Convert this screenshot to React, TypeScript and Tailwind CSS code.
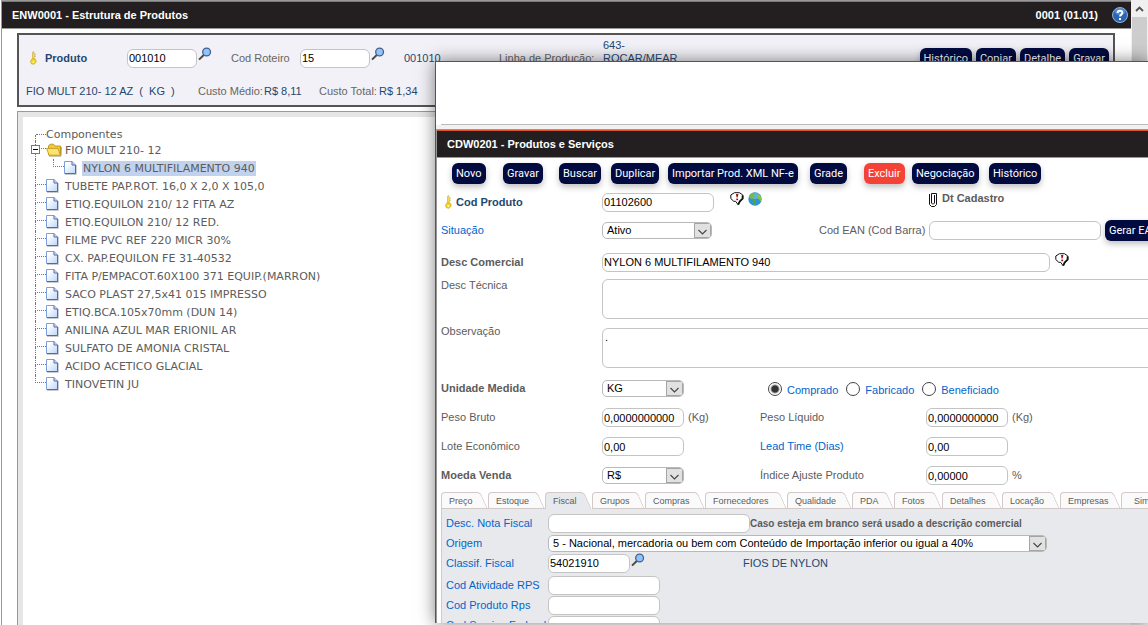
import { useState, type ReactNode } from "react";

const treeItems = [
  "TUBETE PAP.ROT. 16,0 X 2,0 X 105,0",
  "ETIQ.EQUILON 210/ 12 FITA AZ",
  "ETIQ.EQUILON 210/ 12 RED.",
  "FILME PVC REF 220 MICR 30%",
  "CX. PAP.EQUILON FE 31-40532",
  "FITA P/EMPACOT.60X100 371 EQUIP.(MARRON)",
  "SACO PLAST 27,5x41 015 IMPRESSO",
  "ETIQ.BCA.105x70mm (DUN 14)",
  "ANILINA AZUL MAR ERIONIL AR",
  "SULFATO DE AMONIA CRISTAL",
  "ACIDO ACETICO GLACIAL",
  "TINOVETIN JU",
];

const tabs = [
  { name: "Preço", width: "w-[47px]" },
  { name: "Estoque", width: "w-[57px]" },
  { name: "Fiscal", width: "w-[47px]" },
  { name: "Grupos", width: "w-[53px]" },
  { name: "Compras", width: "w-[60px]" },
  { name: "Fornecedores", width: "w-[82px]" },
  { name: "Qualidade", width: "w-[65px]" },
  { name: "PDA", width: "w-[42px]" },
  { name: "Fotos", width: "w-[48px]" },
  { name: "Detalhes", width: "w-[60px]" },
  { name: "Locação", width: "w-[58px]" },
  { name: "Empresas", width: "w-[61px]" },
  { name: "Similares", width: "w-[61px]" },
];

const KeyIcon = () => (
  <svg width="9" height="14" viewBox="0 0 9 14" className="shrink-0">
    <path d="M3.6 1 L5 0.7 L5.4 8 L3.4 8 Z" fill="#f6e36a" stroke="#c9a92c" strokeWidth="0.6" />
    <path d="M2.4 8.4 L4.4 7.4 L6.8 8.6 L7.2 11 L5 13.3 L2.4 12.8 L1.4 10.6 Z" fill="#f3d51c" stroke="#c2a01a" strokeWidth="0.6" />
    <path d="M5.5 3.2h1.2M5.5 5.2h1.2" stroke="#b8a24a" />
    <circle cx="4.3" cy="11" r="1" fill="#fff6a8" />
  </svg>
);

const SearchButton = ({ label }: { label: string }) => (
  <button type="button" aria-label={label} className="shrink-0">
    <svg width="14" height="14" viewBox="0 0 14 14">
      <path d="M1 12.6 L6 7.8" stroke="#4b4a3e" strokeWidth="2" />
      <circle cx="8.6" cy="5" r="3.9" fill="#8cc4ff" stroke="#4a5f86" strokeWidth="1.3" />
    </svg>
  </button>
);

const AlertIcon = () => (
  <svg width="14" height="14" viewBox="0 0 14 14" className="shrink-0">
    <path
      d="M4.5 0.7H9.5L12.8 3V6.6L10 9.3L8 12.6L5.6 9.3H3.8L0.8 6.6V3Z"
      fill="#fff"
      stroke="#111"
      strokeWidth="1"
    />
    <path d="M12.6 3.4V6.6L9.8 9.3L8.2 12.6" fill="none" stroke="#111" strokeWidth="1.8" />
    <path d="M6 2H8.4L7.6 5.6H6.6Z" fill="#9b1010" />
    <rect x="6.3" y="6.6" width="1.8" height="1.6" fill="#9b1010" />
  </svg>
);

const GlobeIcon = () => (
  <svg width="14" height="14" viewBox="0 0 14 14" className="shrink-0">
    <circle cx="7" cy="7" r="6.7" fill="#2b95dc" />
    <ellipse cx="7" cy="4" rx="5" ry="3" fill="#7cc8f2" opacity="0.6" />
    <path d="M0.9 4.5 L3.2 1.6 L6 0.6 L7 1.8 L6 3 L6.8 4.4 L5 5.6 L4.4 7.2 L2.6 6.6 Z" fill="#7cb93c" />
    <path d="M4.4 7.2 L7.6 7.8 L8.4 9.6 L6.8 11.4 L6.6 13.2 L5.4 12 Z" fill="#5fa32e" />
    <path d="M9.2 2.8 L11.4 2.4 L13.2 4.8 L13.6 7.6 L12.4 9.6 L11 7.2 L9.6 6 Z" fill="#86c441" />
  </svg>
);

const ClipIcon = () => (
  <svg width="10" height="16" viewBox="0 0 10 16" className="shrink-0">
    <path d="M1.5 2V12.5L3.5 14.5H6.5L8.5 12.5V1.5H3.5V11L4.5 12H5.5L6.5 11V3" fill="none" stroke="#111" />
  </svg>
);

const HelpIcon = () => (
  <svg width="16" height="16" viewBox="0 0 16 16">
    <circle cx="8" cy="8" r="7.5" fill="#2a66b4" stroke="#9dc0ea" strokeWidth="0.9" />
    <ellipse cx="8" cy="4.5" rx="5.4" ry="3.4" fill="#6ea3de" opacity="0.6" />
    <path d="M5.6 6.1C5.6 3 10.5 3.1 10.4 5.9C10.3 7.7 8 7.6 8 9.6" fill="none" stroke="#fff" strokeWidth="1.9" />
    <rect x="7" y="11" width="2" height="2" fill="#fff" />
  </svg>
);

const FileIcon = () => (
  <svg width="13" height="14" viewBox="0 0 13 14" className="shrink-0">
    <defs>
      <linearGradient id="sheet" x1="0" y1="0" x2="1" y2="1">
        <stop offset="0.2" stopColor="#ffffff" />
        <stop offset="1" stopColor="#b9d7fb" />
      </linearGradient>
    </defs>
    <path d="M1 13.5H12.4V4" fill="none" stroke="#c9c9d2" />
    <path d="M0.5 0.5H8L11.5 4V12.5H0.5Z" fill="url(#sheet)" stroke="#7ba0dc" />
    <path d="M8 0.5V4H11.5V12.5H1" fill="none" stroke="#5a65ad" />
  </svg>
);

const FolderIcon = () => (
  <svg width="16" height="14" viewBox="0 0 16 14" className="shrink-0">
    <path d="M2.5 3L4 1.2H7.5L9 3H14.5V12H2.5Z" fill="#efc93f" stroke="#b98f16" strokeWidth="0.9" />
    <path d="M0.6 5.4H12L14.4 12.2H3Z" fill="#fbe36c" stroke="#c59a1c" strokeWidth="0.9" />
    <path d="M3 13.2H15L15.5 4" fill="none" stroke="#9a8b5a" strokeWidth="0.7" />
  </svg>
);

const Button = ({ children, className = "bg-[#010b40]" }: { children: ReactNode; className?: string }) => (
  <button
    type="button"
    className={`h-[21px] shrink-0 rounded-md px-1 font-[Roboto,sans-serif] text-[11px] leading-[21px] whitespace-nowrap text-white shadow-[0_3px_6px_rgba(0,0,0,0.25)] ${className}`}
  >
    {children}
  </button>
);

const TextInput = ({ id, value = "", className }: { id: string; value?: string; className: string }) => (
  <input
    id={id}
    defaultValue={value}
    className={`h-[19px] rounded-md border border-[#c4c4c4] bg-white px-px text-[11px] text-black outline-none ${className}`}
  />
);

const SelectBox = ({ id, value, className }: { id: string; value: string; className: string }) => (
  <div className={`relative h-[17px] overflow-hidden rounded-[5px] border border-[#b9b9b9] bg-white ${className}`}>
    <select id={id} className="block h-full w-full appearance-none pl-1 text-[11px] leading-[15px] text-black outline-none">
      <option>{value}</option>
    </select>
    <span className="pointer-events-none absolute inset-y-0 right-0 flex w-[17px] items-center justify-center border border-[#a5a5a5] bg-[#e1e1e1] pt-[3px]">
      <svg width="9" height="6" viewBox="0 0 9 6">
        <path d="M0.5 1L4.5 5L8.5 1" fill="none" stroke="#444" strokeWidth="1.1" />
      </svg>
    </span>
  </div>
);

// Dotted connector to the left of every node
const Branch = ({ first = false, last = false }: { first?: boolean; last?: boolean }) => (
  <span className="flex w-[11px] shrink-0 flex-col self-stretch">
    <span className={`h-2 border-b border-dotted border-[#777] ${first ? "ml-px" : "border-l"}`} />
    <span className={`grow border-dotted border-[#777] ${last ? "" : "border-l"}`} />
  </span>
);

const Tree = () => (
  <ul className="pt-[10px] pl-3 font-['DejaVu_Sans',sans-serif] text-[11px] text-[#5c5c5c]">
    <li className="flex h-[14px] items-center">
      <Branch first />
      Componentes
    </li>
    <li>
      <div className="relative flex h-[18px] items-center">
        <Branch />
        <button
          type="button"
          aria-label="Recolher"
          className="absolute top-1 -left-1 flex size-[9px] items-center justify-center border border-[#777] bg-white"
        >
          <span className="h-px w-[5px] bg-black" />
        </button>
        <FolderIcon />
        <span className="ml-[3px]">FIO MULT 210- 12</span>
      </div>
      <ul className="border-l border-dotted border-[#777] pl-[17px]">
        <li className="flex h-[18px] items-center">
          <Branch last />
          <FileIcon />
          <span className="ml-[5px] bg-[#c1d2ee] px-px leading-[15px]">NYLON 6 MULTIFILAMENTO 940</span>
        </li>
      </ul>
    </li>
    {treeItems.map((item, index) => (
      <li key={item} className="flex h-[18px] items-center">
        <Branch last={index === treeItems.length - 1} />
        <FileIcon />
        <span className="ml-[6px] whitespace-nowrap">{item}</span>
      </li>
    ))}
  </ul>
);

const Label = ({ htmlFor, className = "", children }: { htmlFor: string; className?: string; children: ReactNode }) => (
  <label htmlFor={htmlFor} className={`shrink-0 whitespace-nowrap ${className}`}>
    {children}
  </label>
);

const StructurePage = () => (
  <div className="flex h-full">
    <main className="ml-px flex min-w-0 grow flex-col border-t border-l border-[#999] bg-white">
      <header className="flex h-7 shrink-0 items-center border-t border-b border-t-[#e0562b] border-b-[#999] bg-[#231f20] pr-[3px] pl-[10px] text-[11px] font-bold text-white">
        <h1>ENW0001 - Estrutura de Produtos</h1>
        <span className="mr-[14px] ml-auto">0001 (01.01)</span>
        <button type="button" aria-label="Ajuda">
          <HelpIcon />
        </button>
      </header>

      <section className="mt-1 mr-4 ml-[15px] h-[74px] shrink-0 border-2 border-double border-[#555] bg-[#f2f1f7] text-[#25476f]">
        <div className="flex h-[46px] items-center pl-[10px]">
          <KeyIcon />
          <Label htmlFor="produto" className="ml-[7px] w-[82px] font-bold">Produto</Label>
          <TextInput id="produto" value="001010" className="w-[70px]" />
          <span className="mb-2 ml-px flex w-[33px]">
            <SearchButton label="Buscar produto" />
          </span>
          <Label htmlFor="roteiro" className="w-[69px] text-[#666]">Cod Roteiro</Label>
          <TextInput id="roteiro" value="15" className="w-[70px]" />
          <span className="mb-2 ml-px flex w-[33px]">
            <SearchButton label="Buscar roteiro" />
          </span>
          <span className="w-[95px]">001010</span>
          <span className="w-[104px] text-[#666]">Linha de Produção:</span>
          <span className="mb-3 w-20 leading-[13px]">643- ROCAR/MEAR</span>
          <div className="mr-1 ml-auto flex gap-1">
            <Button>Histórico</Button>
            <Button>Copiar</Button>
            <Button>Detalhe</Button>
            <Button>Gravar</Button>
          </div>
        </div>
        <div className="flex h-5 items-center pl-[7px]">
          <span className="w-[172px] whitespace-pre">FIO MULT 210- 12 AZ  (  KG  )</span>
          <span className="w-[66px] text-[#666]">Custo Médio:</span>
          <span className="w-[55px]">R$ 8,11</span>
          <span className="w-[60px] text-[#666]">Custo Total:</span>
          <span>R$ 1,34</span>
        </div>
      </section>

      <section className="mt-1 mr-4 ml-[15px] grow border-t border-l border-[#999] bg-[#e6e6e6] pt-[5px] pl-[5px]">
        <div className="h-full bg-white">
          <Tree />
        </div>
      </section>
    </main>
    <div className="w-[17px] shrink-0 bg-[#f0f0f0]">
      <div className="flex h-[17px] items-center justify-center">
        <svg width="9" height="6" viewBox="0 0 9 6">
          <path d="M1 5L4.5 1.5L8 5" fill="none" stroke="#505050" strokeWidth="1.8" />
        </svg>
      </div>
      <div className="mx-px h-1/2 bg-[#cdcdcd]" />
    </div>
  </div>
);

const FiscalPanel = () => (
  <div className="grow border-l border-[#d3c9c9] bg-[#e8e9ed] pt-1 pl-1 text-[#0066cc]">
    <div className="flex h-5 items-center">
      <Label htmlFor="nota" className="w-[102px]">Desc. Nota Fiscal</Label>
      <TextInput id="nota" className="w-[202px]" />
      <b className="text-[10px] whitespace-nowrap text-[#5c5c5c]">Caso esteja em branco será usado a descrição comercial</b>
    </div>
    <div className="flex h-5 items-center">
      <Label htmlFor="origem" className="w-[102px]">Origem</Label>
      <SelectBox
        id="origem"
        value="5 - Nacional, mercadoria ou bem com Conteúdo de Importação inferior ou igual a 40%"
        className="w-[499px]"
      />
    </div>
    <div className="mb-[2px] flex h-5 items-center">
      <Label htmlFor="classif" className="w-[102px]">Classif. Fiscal</Label>
      <TextInput id="classif" value="54021910" className="w-[82px]" />
      <span className="mb-[6px] ml-px flex w-28">
        <SearchButton label="Buscar classificação" />
      </span>
      <span className="text-[#25476f]">FIOS DE NYLON</span>
    </div>
    <div className="flex h-5 items-center">
      <Label htmlFor="atividade" className="w-[102px]">Cod Atividade RPS</Label>
      <TextInput id="atividade" className="w-28" />
    </div>
    <div className="flex h-5 items-center">
      <Label htmlFor="rps" className="w-[102px]">Cod Produto Rps</Label>
      <TextInput id="rps" className="w-28" />
    </div>
    <div className="flex h-5 items-center">
      <Label htmlFor="servico" className="w-[102px]">Cod Serviço Federal</Label>
      <TextInput id="servico" className="w-28" />
    </div>
  </div>
);

const ProductWindow = () => {
  const [tab, setTab] = useState("Fiscal");
  const [kind, setKind] = useState("Comprado");

  return (
    <div
      role="dialog"
      aria-label="Produtos e Serviços"
      className="absolute top-[61px] right-0 bottom-[2px] left-[435px] flex flex-col overflow-hidden border-t border-l border-[#555] bg-white shadow-[0_0_16px_rgba(0,0,0,0.5)]"
    >
      <div className="ml-[5px] h-[63px] shrink-0 border-b border-[#bbb]" />
      <div className="h-1 shrink-0 bg-[#f1f1f3]" />
      <div className="flex min-h-0 grow flex-col border-t border-l border-[#999]">
        <header className="flex h-7 shrink-0 items-center border-t border-b border-t-[#e0562b] border-b-[#999] bg-[#231f20] pl-[10px] font-bold text-white">
          <h2>CDW0201 - Produtos e Serviços</h2>
        </header>

        <div className="flex h-[30px] shrink-0 items-center pl-[15px]">
          <span className="w-[51px] shrink-0"><Button>Novo</Button></span>
          <span className="w-14 shrink-0"><Button>Gravar</Button></span>
          <span className="w-[52px] shrink-0"><Button>Buscar</Button></span>
          <span className="w-[57px] shrink-0"><Button>Duplicar</Button></span>
          <span className="w-[142px] shrink-0"><Button>Importar Prod. XML NF-e</Button></span>
          <span className="w-[54px] shrink-0"><Button>Grade</Button></span>
          <span className="w-12 shrink-0"><Button className="bg-[#f44336]">Excluir</Button></span>
          <span className="w-[77px] shrink-0"><Button>Negociação</Button></span>
          <Button>Histórico</Button>
        </div>

        <form className="flex min-h-0 grow flex-col pl-1 text-[#5c5c5c]">
          <div className="flex h-7 shrink-0 items-center">
            <span className="flex w-[161px] shrink-0 items-center gap-[3px] pl-[3px] text-[#25476f]">
              <KeyIcon />
              <Label htmlFor="cod" className="font-bold">Cod Produto</Label>
            </span>
            <TextInput id="cod" value="01102600" className="w-28" />
            <span className="mb-[6px] ml-4 flex w-[198px] shrink-0 gap-1">
              <AlertIcon />
              <GlobeIcon />
            </span>
            <span className="mb-1"><ClipIcon /></span>
            <b className="mb-2 ml-1">Dt Cadastro</b>
          </div>
          <div className="flex h-[29px] shrink-0 items-center">
            <Label htmlFor="situacao" className="w-[161px] text-[#0066cc]">Situação</Label>
            <SelectBox id="situacao" value="Ativo" className="w-[110px] shrink-0" />
            <Label htmlFor="ean" className="ml-[107px] w-[110px]">Cod EAN (Cod Barra)</Label>
            <TextInput id="ean" className="mr-1 w-[172px] shrink-0" />
            <Button>Gerar EAN</Button>
          </div>
          <div className="flex h-[34px] shrink-0 items-center">
            <Label htmlFor="comercial" className="w-[161px] font-bold">Desc Comercial</Label>
            <TextInput id="comercial" value="NYLON 6 MULTIFILAMENTO 940" className="mr-[5px] w-[448px]" />
            <span className="mb-1"><AlertIcon /></span>
          </div>
          <div className="flex shrink-0">
            <Label htmlFor="tecnica" className="w-[161px]">Desc Técnica</Label>
            <textarea id="tecnica" className="-mr-2 h-10 grow resize-none rounded-md border border-[#c4c4c4] bg-white outline-none" />
          </div>
          <div className="mb-[6px] flex shrink-0">
            <Label htmlFor="obs" className="w-[161px] pt-[6px]">Observação</Label>
            <textarea
              id="obs"
              defaultValue="."
              className="mt-[9px] -mr-2 h-10 grow resize-none rounded-md border border-[#c4c4c4] bg-white px-[2px] pt-[2px] text-black outline-none"
            />
          </div>
          <div className="flex h-[29px] shrink-0 items-center">
            <Label htmlFor="unidade" className="w-[161px] font-bold">Unidade Medida</Label>
            <SelectBox id="unidade" value="KG" className="w-[82px]" />
            <div className="ml-[84px] flex gap-2">
              {["Comprado", "Fabricado", "Beneficiado"].map((option) => (
                <label key={option} className="flex items-center gap-[5px] text-[#0066cc]">
                  <input
                    type="radio"
                    name="kind"
                    checked={kind === option}
                    onChange={() => setKind(option)}
                    className="size-[14px] appearance-none rounded-full border border-[#444] bg-white checked:bg-[radial-gradient(circle,#333_3px,transparent_5px)]"
                  />
                  <span className="pt-1">{option}</span>
                </label>
              ))}
            </div>
          </div>
          <div className="flex h-[29px] shrink-0 items-center">
            <Label htmlFor="bruto" className="w-[161px]">Peso Bruto</Label>
            <TextInput id="bruto" value="0,0000000000" className="w-[82px]" />
            <span className="ml-1 w-[72px]">(Kg)</span>
            <Label htmlFor="liquido" className="w-[166px]">Peso Líquido</Label>
            <TextInput id="liquido" value="0,0000000000" className="w-[82px]" />
            <span className="ml-1">(Kg)</span>
          </div>
          <div className="flex h-[29px] shrink-0 items-center">
            <Label htmlFor="lote" className="w-[161px]">Lote Econômico</Label>
            <TextInput id="lote" value="0,00" className="mr-[76px] w-[82px]" />
            <Label htmlFor="lead" className="w-[166px] text-[#0066cc]">Lead Time (Dias)</Label>
            <TextInput id="lead" value="0,00" className="w-[82px]" />
          </div>
          <div className="flex h-[29px] shrink-0 items-center">
            <Label htmlFor="moeda" className="w-[161px] font-bold">Moeda Venda</Label>
            <SelectBox id="moeda" value="R$" className="mr-[76px] w-[82px]" />
            <Label htmlFor="indice" className="w-[166px]">Índice Ajuste Produto</Label>
            <TextInput id="indice" value="0,00000" className="w-[82px]" />
            <span className="ml-1">%</span>
          </div>

          <div role="tablist" className="mt-[2px] flex h-[17px] shrink-0">
            {tabs.map(({ name, width }) => (
              <button
                key={name}
                type="button"
                role="tab"
                aria-selected={tab === name}
                onClick={() => setTab(name)}
                className={`relative isolate shrink-0 pt-px pl-2 text-left text-[9px] leading-4 whitespace-nowrap before:absolute before:inset-y-0 before:right-[10px] before:left-0 before:-z-10 before:rounded-tl before:border-t before:border-l before:border-[#d3c9c9] after:absolute after:inset-y-0 after:right-1 after:-z-10 after:w-4 after:skew-x-[24deg] after:rounded-tr after:border-t after:border-r after:border-[#d3c9c9] last:pl-[13px] ${width} ${
                  tab === name ? "before:bg-[#e8e9ed] after:bg-[#e8e9ed]" : "border-b border-[#d3c9c9] before:bg-[#fafafa] after:bg-[#fafafa]"
                }`}
              >
                {name}
              </button>
            ))}
          </div>
          <FiscalPanel />
        </form>
      </div>
    </div>
  );
};

export default function App() {
  return (
    <div className="relative h-screen overflow-hidden bg-white font-['Liberation_Sans',Arial,sans-serif] text-[11px] leading-[13px]">
      <StructurePage />
      <ProductWindow />
    </div>
  );
}
